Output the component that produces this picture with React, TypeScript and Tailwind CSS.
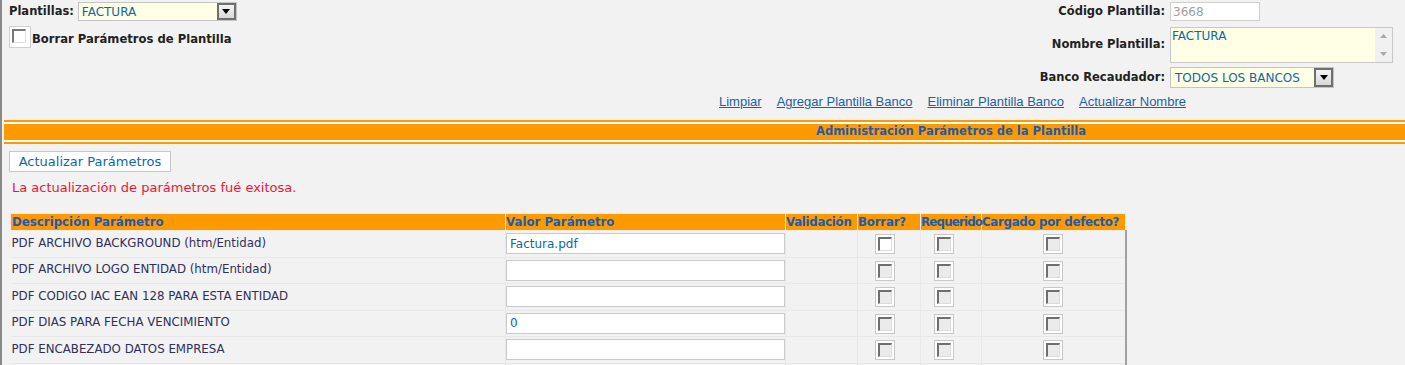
import React from "react";

const V = { fontFamily: '"DejaVu Sans", Verdana, sans-serif' };
const A = { fontFamily: '"Liberation Sans", Arial, sans-serif' };

function Check({ white = false }: { white?: boolean }) {
  return (
    <span className="inline-flex h-[20px] w-[20px] items-center justify-center border border-[#c8c8c8] bg-white align-middle">
      <span
        className={`block h-[14px] w-[14px] border-t-2 border-l-2 border-r border-b border-t-[#6e6e6e] border-l-[#6e6e6e] border-r-[#dcdcdc] border-b-[#dcdcdc] ${
          white ? "bg-white" : "bg-[#ebebeb]"
        }`}
      />
    </span>
  );
}

function Arrow() {
  return (
    <span className="flex h-full w-[19px] items-center justify-center border-2 border-[#6f6f6f] bg-gradient-to-b from-[#f4f4f4] to-[#d8d8d8]">
      <svg width="8" height="5" viewBox="0 0 8 5">
        <path d="M0 0h8L4 5z" fill="#000" />
      </svg>
    </span>
  );
}

const rows = [
  { d: "PDF ARCHIVO BACKGROUND (htm/Entidad)", v: "Factura.pdf", w: true },
  { d: "PDF ARCHIVO LOGO ENTIDAD (htm/Entidad)", v: "" },
  { d: "PDF CODIGO IAC EAN 128 PARA ESTA ENTIDAD", v: "" },
  { d: "PDF DIAS PARA FECHA VENCIMIENTO", v: "0" },
  { d: "PDF ENCABEZADO DATOS EMPRESA", v: "" },
  { d: "", v: "" },
];

export default function App() {
  return (
    <div className="relative h-[365px] w-[1405px] overflow-hidden border-l-2 border-[#8a8a8a] bg-[#f2f2f2]">
      {/* top area */}
      <div className="flex h-[92px] items-start justify-between pt-[2px]">
        <div className="pl-[7px]">
          <div className="flex h-[19px] items-center">
            <span className="text-[11.5px] font-bold text-[#222]" style={V}>
              Plantillas:
            </span>
            <div className="ml-[4px] flex h-[19px] w-[159px] items-center border border-[#c4c4c4] bg-[#ffffe6] pl-[3px]">
              <span className="flex-1 text-[12px] text-[#0a68a8]" style={V}>
                FACTURA
              </span>
              <Arrow />
            </div>
          </div>
          <div className="mt-[5px] flex items-start">
            <span className="inline-flex h-[22px] w-[22px] items-start justify-start border border-[#d0d0d0] bg-white pl-[2px] pt-[2px]">
              <span className="block h-[14px] w-[14px] border-t-2 border-l-2 border-r border-b border-t-[#7a7a7a] border-l-[#7a7a7a] border-r-[#e0e0e0] border-b-[#e0e0e0] bg-white" />
            </span>
            <span className="ml-[1px] pt-[5px] text-[11.6px] font-bold leading-[17px] text-[#222]" style={V}>
              Borrar Parámetros de Plantilla
            </span>
          </div>
        </div>

        <div className="grid grid-cols-[auto_223px] content-start items-center gap-x-[5px] pr-[12px]">
          <span className="text-right text-[11.5px] font-bold text-[#222]" style={V}>
            Código Plantilla:
          </span>
          <div className="flex h-[19px] w-[90px] items-center border border-[#cfcfcf] bg-white pl-[2px]">
            <span className="text-[12px] text-[#a0a0a0]" style={V}>
              3668
            </span>
          </div>

          <span className="mt-[6px] text-right text-[11.5px] font-bold text-[#222]" style={V}>
            Nombre Plantilla:
          </span>
          <div className="mt-[6px] flex h-[36px] w-[223px] border border-[#c8c8c8] bg-[#ffffe6]">
            <span className="flex-1 pl-[1px] pt-[1px] text-[12px] leading-[15px] text-[#0a68a8]" style={V}>
              FACTURA
            </span>
            <div className="flex w-[17px] flex-col items-center justify-between bg-[#f0f0f0] py-[6px]">
              <svg width="7" height="4" viewBox="0 0 7 4">
                <path d="M3.5 0L7 4H0z" fill="#a8a8a8" />
              </svg>
              <svg width="7" height="4" viewBox="0 0 7 4">
                <path d="M0 0h7L3.5 4z" fill="#a8a8a8" />
              </svg>
            </div>
          </div>

          <span className="mt-[4px] text-right text-[11.5px] font-bold text-[#222]" style={V}>
            Banco Recaudador:
          </span>
          <div className="mt-[4px] flex h-[21px] w-[164px] items-center border border-[#c4c4c4] bg-[#ffffe6] pl-[4px]">
            <span className="flex-1 text-[12px] text-[#0a68a8]" style={V}>
              TODOS LOS BANCOS
            </span>
            <Arrow />
          </div>
        </div>
      </div>

      {/* links */}
      <div className="flex h-[20px] items-center justify-end gap-[15px] pr-[219px] text-[13px] text-[#1f5fa6] underline" style={A}>
        <span>Limpiar</span>
        <span>Agregar Plantilla Banco</span>
        <span>Eliminar Plantilla Banco</span>
        <span>Actualizar Nombre</span>
      </div>

      {/* band */}
      <div className="ml-[2px] mt-[8px]">
        <div className="h-[2px] bg-[#ff9900]" />
        <div className="h-[2px] bg-[#fdfdfd]" />
        <div className="flex h-[16px] items-center bg-[#ff9900] pl-[812px]">
          <span className="text-[11.5px] font-bold text-[#1a5cb0]" style={V}>
            Administración Parámetros de la Plantilla
          </span>
        </div>
        <div className="h-[2px] bg-[#fdfdfd]" />
        <div className="h-[2px] bg-[#ff9900]" />
      </div>

      {/* button */}
      <div className="ml-[7px] mt-[7px] flex h-[21px] w-[162px] items-center justify-center border border-[#c8c8c8] bg-white">
        <span className="text-[13px] text-[#0a68a8]" style={V}>
          Actualizar Parámetros
        </span>
      </div>

      <div className="ml-[10px] mt-[8px] h-[16px] text-[13px] leading-[16px] text-[#f01534]" style={V}>
        La actualización de parámetros fué exitosa.
      </div>

      {/* table */}
      <table className="ml-[8px] mt-[17px] w-[1115px] table-fixed border-collapse" style={V}>
        <colgroup>
          <col className="w-[495px]" />
          <col className="w-[280px]" />
          <col className="w-[72px]" />
          <col className="w-[63px]" />
          <col className="w-[61px]" />
          <col className="w-[144px]" />
        </colgroup>
        <thead>
          <tr className="h-[17px] bg-[#ff9900] text-left text-[11.8px] font-bold whitespace-nowrap text-[#1a5cb0]">
            <th className="border border-[#ececec] px-[1px] py-0 leading-[15px]">Descripción Parámetro</th>
            <th className="border border-[#ececec] px-0 py-0 leading-[15px]">Valor Parámetro</th>
            <th className="border border-[#ececec] px-0 py-0 leading-[15px] tracking-[-0.3px]">Validación</th>
            <th className="border border-[#ececec] px-0 py-0 leading-[15px] tracking-[-0.2px]">Borrar?</th>
            <th className="border border-[#ececec] px-0 py-0 leading-[15px] tracking-[-0.8px]">Requerido</th>
            <th className="border border-[#ececec] px-0 py-0 leading-[15px] tracking-[-0.3px]">Cargado por defecto?</th>
          </tr>
        </thead>
        <tbody>
          {rows.map((r, i) => (
            <tr key={i} className="h-[26.5px]">
              <td className="border border-l-0 border-[#e8e8e8] px-[1px] text-[11.8px] whitespace-nowrap text-[#30305a]">{r.d}</td>
              <td className="border border-[#e8e8e8] px-0">
                <div className="flex h-[21px] w-[279px] items-center border border-[#cacaca] bg-white pl-[3px] text-[12px] text-[#0a68a8]">
                  {r.v}
                </div>
              </td>
              <td className="border border-[#e8e8e8]" />
              <td className="border border-[#e8e8e8] pl-[17px]">
                <Check white={!!r.w} />
              </td>
              <td className="border border-[#e8e8e8] pl-[13px]">
                <Check />
              </td>
              <td className="border border-r-2 border-[#e8e8e8] border-r-[#a0a0a0] pl-[61px]">
                <Check />
              </td>
            </tr>
          ))}
        </tbody>
      </table>
    </div>
  );
}
